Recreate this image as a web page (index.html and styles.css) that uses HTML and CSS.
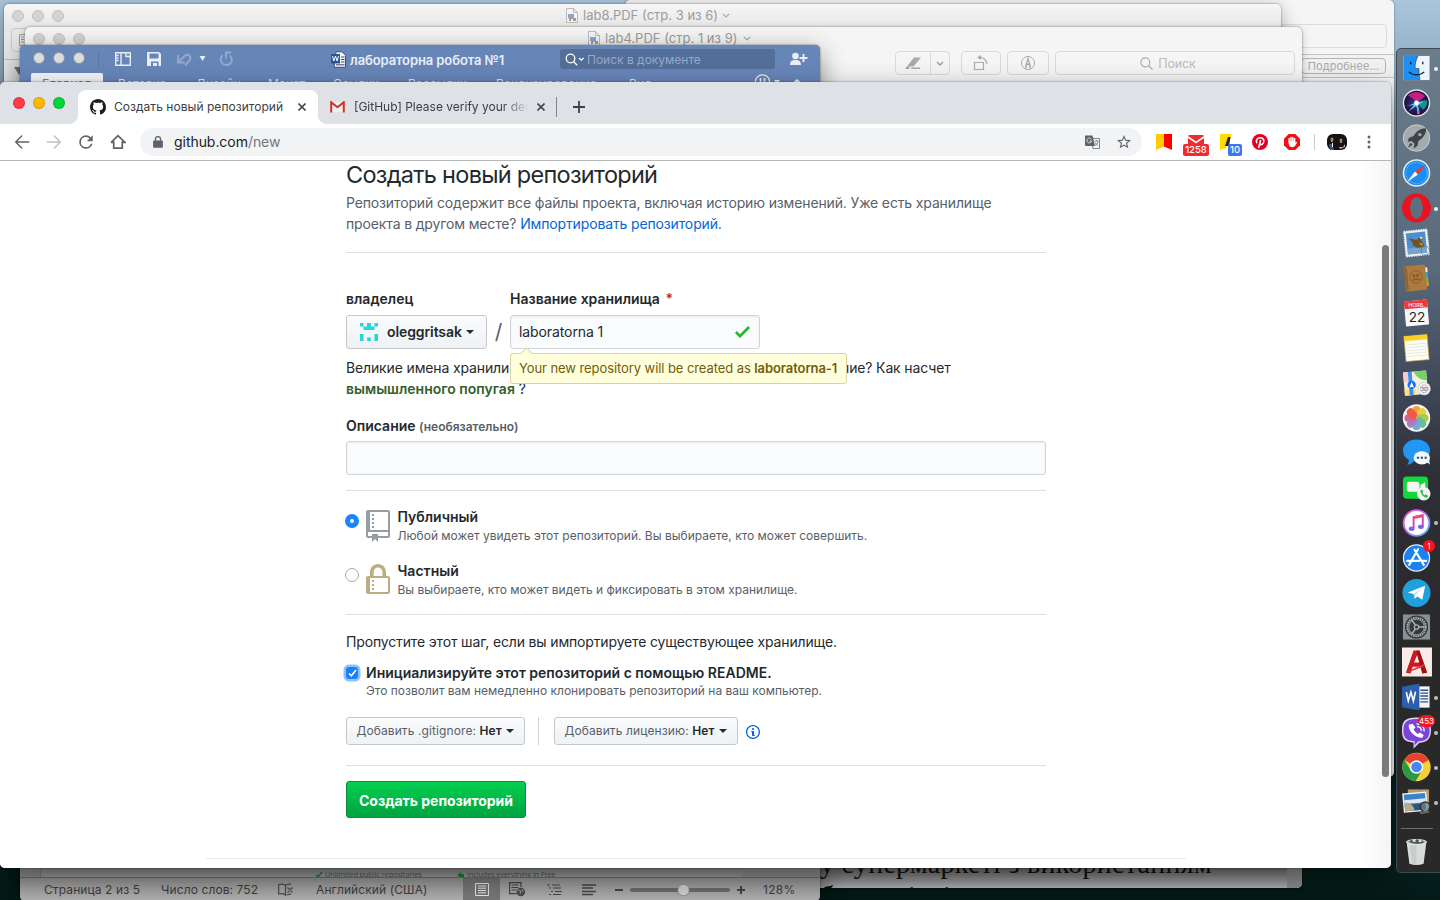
FILE: index.html
```html
<!DOCTYPE html>
<html lang="ru">
<head>
<meta charset="utf-8">
<title>Создать новый репозиторий</title>
<link rel="stylesheet" href="styles.css">
</head>
<body>
<div class="desktop">

  <section class="win win-mail">
    <div class="mail-field"></div>
    <div class="mail-bar"><span class="mail-more">Подробнее...</span></div>
  </section>

  <section class="win win-lab8">
    <div class="pdf-title">
      <div class="lights"><i></i><i></i><i></i></div>
      <div class="pdf-name"><svg class="pdf-icon" width="12" height="15" viewBox="0 0 12 15"><path d="M.5.5h7l4 4v10H.5z" fill="#f4f4f4" stroke="#bbb"/><path d="M7.500 .5v4h4" fill="none" stroke="#bbb"/><rect x="2" y="6" width="6" height="4" fill="#8fa3cb"/><path d="M3 10h7v3H7v-2H5v2H3z" fill="#a39a98"/></svg><span class="t8">lab8.PDF (стр. 3 из 6)</span><svg width="8" height="5" viewBox="0 0 8 5"><path d="M.8.8 4 4 7.200 .8" fill="none" stroke="#aaa" stroke-width="1.200"/></svg></div>
    </div>
    <div class="lab8-tool"><svg width="6" height="12" viewBox="0 0 6 12"><path d="M6 .5H.5v11H6M2 3h3M2 5.500h3M2 8h3" fill="none" stroke="#999"/></svg></div>
    <div class="lab8-tri"></div>
  </section>

  <section class="win win-lab4">
    <div class="pdf-title">
      <div class="lights"><i></i><i></i><i></i></div>
      <div class="pdf-name"><svg class="pdf-icon" width="12" height="15" viewBox="0 0 12 15"><path d="M.5.5h7l4 4v10H.5z" fill="#f4f4f4" stroke="#bbb"/><path d="M7.500 .5v4h4" fill="none" stroke="#bbb"/><rect x="2" y="6" width="6" height="4" fill="#8fa3cb"/><path d="M3 10h7v3H7v-2H5v2H3z" fill="#a39a98"/></svg><span class="t8">lab4.PDF (стр. 1 из 9)</span><svg width="8" height="5" viewBox="0 0 8 5"><path d="M.8.8 4 4 7.200 .8" fill="none" stroke="#aaa" stroke-width="1.200"/></svg></div>
    </div>
    <div class="pdf-tools">
      <div class="pbtn split"><span><svg width="17" height="12" viewBox="0 0 17 12"><path d="M3 8 9 .5h7L8.500 9.500H4zM0 12l2.500-3.500L5 10.500 3.500 12zM7 10.500h8V12H5.500z" fill="#aaa"/></svg></span><b><svg width="8" height="5" viewBox="0 0 8 5"><path d="M1 1l3 3 3-3" fill="none" stroke="#999" stroke-width="1.300"/></svg></b></div>
      <div class="pbtn rot"><svg width="16" height="16" viewBox="0 0 16 16"><path d="M1.500 7.500h9v7h-9zM5 2.500c5-1 8.500 2 9 6.500" fill="none" stroke="#aaa" stroke-width="1.200"/><path d="M8 0 4 2.600 8 5z" fill="#aaa"/></svg></div>
      <div class="pbtn mark"><svg width="16" height="16" viewBox="0 0 16 16"><circle cx="8" cy="8" r="6.500" fill="none" stroke="#aaa"/><path d="M5.500 12 8 3.500l2.500 8.500M6 10.500 8 9l2 1.500V13.500M6 10.500V13.500" fill="none" stroke="#aaa" stroke-width="1.200"/></svg></div>
      <div class="pbtn find"><svg width="13" height="13" viewBox="0 0 13 13"><circle cx="5.300" cy="5.300" r="4.500" fill="none" stroke="#b0b0b0" stroke-width="1.200"/><path d="m8.500 8.500 4 4" stroke="#b0b0b0" stroke-width="1.300"/></svg><span>Поиск</span></div>
    </div>
    <div class="pdf-doc"><p class="doc-l1">у супермаркеті з використанням</p><p class="doc-l2"><span>б</span><span>і</span><span>і</span></p></div>
  </section>

  <section class="win win-word">
    <div class="word-top">
      <div class="lights"><i></i><i></i><i></i></div>
      <svg class="word-tools" width="150" height="20" viewBox="0 0 150 20">
        <path d="M.5 3v16" stroke="#58739f" opacity=".8"/>
        <g fill="none" stroke="#e8edf6" stroke-width="1.400"><path d="M17.700 4.700h14.600v12.600H17.700zM23 5v12M18.500 7.500h2M18.500 10h2M18.500 12.500h2" /><path d="M28 4.500v4h4.500"/></g>
        <path d="M49 4h12l2 2v12H49zM51.500 5.500v5h9v-5zm1.500 8v4.500h2V15h4v3h1.500v-4.500z" fill="#e8edf6" fill-rule="evenodd"/>
        <g fill="none" stroke="#93a9cd" stroke-width="1.900"><path d="M80 7v7.500h7M80.500 14 86 8.500c4-4.500 9 1 5 4.500l-4 4.500"/></g>
        <path d="M101.500 8h6l-3 5z" fill="#e8edf6"/>
        <path d="M124.500 7c-4 5-.5 10 4 10 5 0 7-5 3.500-9.500M133 4.500h-5v6" fill="none" stroke="#93a9cd" stroke-width="1.900"/>
      </svg>
      <svg class="word-doc" width="15" height="17" viewBox="0 0 15 17"><path d="M5 .8h6l3.500 3.500v12H3z" fill="#f5f7fa" stroke="#39517e"/><path d="M10 6h3.500M10 8.500h3.500M10 11h3.500M5 13.800h8.500" stroke="#446"/><path d="M0 3h9v9.500H0z" fill="#2b579a"/><path d="m1.500 5 1.300 5 1.700-5 1.600 5L7.500 5" stroke="#fff" fill="none"/></svg>
      <strong class="word-title">лабораторна робота №1</strong>
      <div class="word-search"><svg width="20" height="13" viewBox="0 0 20 13"><circle cx="5.500" cy="5.500" r="4.300" fill="none" stroke="#fff" stroke-width="1.300"/><path d="m8.700 8.700 3.500 3.500M14 5l2.300 2.200L18.600 5" fill="none" stroke="#fff" stroke-width="1.300"/></svg><span>Поиск в документе</span></div>
      <svg class="word-share" width="18" height="14" viewBox="0 0 18 14"><circle cx="5.500" cy="4" r="3.300" fill="#e8edf6"/><path d="M0 13c0-4 2-5 5.500-5S11 9 11 13zM12.500 2h2v3h3v2h-3v3h-2V7h-3V5h3z" fill="#e8edf6"/></svg>
    </div>
    <div class="word-tabs"><span class="on w1">Главная</span><span class="w2">Вставка</span><span class="w3">Дизайн</span><span class="w4">Макет</span><span class="w5">Ссылки</span><span class="w6">Рассылки</span><span class="w7">Рецензирование</span><span class="w8">Вид</span>
      <svg class="smile" width="48" height="16" viewBox="0 0 48 16"><circle cx="8.500" cy="8" r="7.200" fill="none" stroke="#e8edf6" stroke-width="1.300"/><path d="M6.500 4v4M10.500 4v4" stroke="#e8edf6" stroke-width="1.600"/><path d="M20 6h6l-3 4zM38 9l5-4 5 4z" fill="#e8edf6"/></svg>
    </div>
    <div class="word-page"><div><svg width="8" height="7" viewBox="0 0 8 7"><path d="m1 4 2 2 4-5" fill="none" stroke="#188038" stroke-width="1.500"/></svg><span class="p1">Unlimited public repositories</span><svg width="8" height="7" viewBox="0 0 8 7"><path d="M0 4.500 4 1v2h3v3H3z" fill="#188038"/></svg><span>Includes everything in Free</span></div></div>
    <div class="word-status">
      <span class="s1">Страница 2 из 5</span><span class="s2">Число слов: 752</span>
      <svg class="s3" width="16" height="14" viewBox="0 0 16 14"><path d="M7.500 2.500C6 1 3 1 .7 1.500V11c2.300-.5 5-.5 6.800 1M7.500 2.500V13M7.500 2.500C8.500 1.300 11 1 13 1.300M9 12c1-.7 2-.9 4-.9M9.500 4.500l5 5M14.500 4.500l-5 5" fill="none" stroke="#4a4a4a" stroke-width="1.200"/></svg>
      <span class="s4">Английский (США)</span>
      <span class="s5"><svg width="14" height="13" viewBox="0 0 14 13"><path d="M.5.5h13v12H.5zM3 3h8M3 5.200h8M3 7.500h8M3 9.800h8" fill="none" stroke="#e5e5e5"/></svg></span>
      <svg class="s6" width="17" height="15" viewBox="0 0 17 15"><path d="M12 5V.6H.6v11h7M2.500 3h7M2.500 5.500h7M2.500 8h5" fill="none" stroke="#444" stroke-width="1.200"/><circle cx="11.800" cy="10" r="4.300" fill="#4a4a4a"/><path d="M9 8l3 1-1 3M13 7l1 3" stroke="#999" fill="none"/></svg>
      <svg class="s7" width="16" height="12" viewBox="0 0 16 12"><path d="M0 1h3M5 1h8M2 4h2M6 4h8M4 7.500h2M8 7.500h7M2 10.500h2M6 10.500h8" stroke="#444" stroke-width="1.200"/></svg>
      <svg class="s8" width="14" height="12" viewBox="0 0 14 12"><path d="M0 1h14M0 4h11M0 7.500h14M0 10.500h11" stroke="#444" stroke-width="1.300"/></svg>
      <svg class="s9" width="132" height="14" viewBox="0 0 132 14"><path d="M1 7h8M123 7h8M127 3v8" stroke="#444" stroke-width="2"/><rect x="16" y="5" width="100" height="4" rx="2" fill="#6b6b6b"/><circle cx="69.500" cy="7" r="5.700" fill="#d0d0d0" stroke="#777" stroke-width=".6"/></svg>
      <span class="s10">128%</span>
    </div>
  </section>

  <main class="win chrome">
    <div class="strip">
      <div class="clights"><i class="r"></i><i class="y"></i><i class="g"></i></div>
      <div class="tab active">
        <svg width="16" height="16" viewBox="0 0 16 16"><path fill="#1b1f23" d="M8 0C3.580 0 0 3.580 0 8c0 3.540 2.290 6.530 5.470 7.590.4.070.55-.17.55-.38 0-.19-.01-.82-.01-1.490-2.010.37-2.530-.49-2.690-.94-.09-.23-.48-.94-.82-1.130-.28-.15-.68-.52-.01-.53.63-.01 1.080.58 1.230.82.72 1.210 1.870.87 2.330.66.07-.52.28-.87.51-1.070-1.780-.2-3.640-.89-3.640-3.950 0-.87.31-1.590.82-2.150-.08-.2-.36-1.020.08-2.120 0 0 .67-.21 2.200.82.64-.18 1.320-.27 2-.27s1.360.09 2 .27c1.530-1.040 2.200-.82 2.200-.82.44 1.100.16 1.920.08 2.120.51.56.82 1.270.82 2.150 0 3.070-1.870 3.750-3.650 3.950.29.25.54.73.54 1.480 0 1.070-.01 1.930-.01 2.200 0 .21.15.46.55.38A8.010 8.010 0 0 0 16 8c0-4.420-3.580-8-8-8z"/></svg>
        <span class="tt1">Создать новый репозиторий</span>
        <svg class="x" width="8" height="8" viewBox="0 0 8 8"><path d="m.5.5 7 7m0-7-7 7" stroke="#45494d" stroke-width="1.600"/></svg>
      </div>
      <div class="tab second">
        <svg width="15" height="12" viewBox="0 0 15 12"><path d="M1 1h13v10H1z" fill="#eceff1"/><path d="M1.200 11.500V1.200l6.300 5 6.300-5v10.300" fill="none" stroke="#d93025" stroke-width="2"/></svg>
        <span class="tt2">[GitHub] Please verify your device</span>
        <svg class="x" width="8" height="8" viewBox="0 0 8 8"><path d="m.5.5 7 7m0-7-7 7" stroke="#45494d" stroke-width="1.600"/></svg>
      </div>
      <svg class="newtab" width="12" height="12" viewBox="0 0 12 12"><path d="M6 0v12M0 6h12" stroke="#3c4043" stroke-width="1.800"/></svg>
    </div>
    <div class="toolbar">
      <svg class="ic" viewBox="1 1 22 22"><path fill="#5f6368" d="M22 10.800H5.800l7.100-6.900L11.500 2.500 2 12l9.500 9.500 1.400-1.400L5.800 13.200H22z"/></svg>
      <svg class="ic" viewBox="1 1 22 22"><path fill="#bdc1c6" d="M2 10.800h16.200l-7.100-6.900 1.400-1.400L22 12l-9.500 9.500-1.400-1.400 7.100-6.900H2z"/></svg>
      <svg class="ic" viewBox="2.500 2.500 19 19"><path fill="#5f6368" d="M17.650 6.350A7.950 7.950 0 0 0 12 4a8 8 0 1 0 7.730 10h-2.080A6 6 0 1 1 12 6c1.660 0 3.140.69 4.220 1.780L13 11h7V4z"/></svg>
      <svg class="ic" viewBox="0 0 18 18"><path fill="none" stroke="#5f6368" stroke-width="1.900" d="M4.200 8.200v7.700h9.600V8.200M1.200 9.500 9 1.800l7.800 7.700h-3M1.200 9.500h3"/></svg>
      <div class="omni">
        <svg width="10" height="12" viewBox="0 0 10 12"><path fill="#5f6368" d="M1 4.500h.8V3.200a3.200 3.200 0 0 1 6.400 0v1.300H9c.5 0 .9.400.9.900v5.400c0 .6-.4 1-.9 1H1c-.6 0-.9-.4-.9-1V5.400c0-.5.4-.9.900-.9zm2.100 0h3.800V3.200a1.900 1.900 0 0 0-3.800 0z"/></svg>
        <span class="url"><b>github.com</b>/new</span>
        <svg class="tr" width="15" height="14" viewBox="0 0 15 14"><path d="M6 3.500h8.500v10H8z" fill="#f5f5f5" stroke="#80868b"/><path d="M0 .5h7.500L10 11H1.500Q0 11 0 9.500z" fill="#5f6368"/><path d="M6.300 4.200A2.400 2.400 0 1 0 6.600 6H4.500" fill="none" stroke="#ddd"/><path d="M9.500 6h4M11.500 5v1M13 6.500c-.5 2-2 3.500-3 4M10.300 7.500c.5 1.500 1.500 2.500 2.700 3" fill="none" stroke="#80868b"/></svg>
        <svg width="14" height="14" viewBox="2 2 20 20"><path fill="#5f6368" d="m22 9.240-7.190-.62L12 2 9.190 8.630 2 9.240l5.460 4.730L5.820 21 12 17.270 18.180 21l-1.630-7.030zM12 15.400l-3.760 2.270 1-4.280-3.320-2.880 4.380-.38L12 6.100l1.710 4.040 4.380.38-3.320 2.880 1 4.280z"/></svg>
      </div>
      <div class="ext">
        <svg width="16" height="16" viewBox="0 0 16 16"><path d="M0 0h8v12.500L0 16z" fill="#fc0"/><path d="M8 0h8v16l-8-3.500z" fill="#f00"/></svg>
        <div class="e2"><svg width="16" height="13" viewBox="0 0 16 13"><rect y="1" width="16" height="12" rx="1.500" fill="#f02a2e"/><path d="M0 3 8 8.500 16 3" fill="none" stroke="#fff" stroke-width="1.700"/></svg><em>1258</em></div>
        <div class="e3"><svg width="16" height="16" viewBox="0 0 16 16"><path d="M0 0h12L6 14l-6 2z" fill="#ffdb00"/><path d="M8 3h2.500L9 12H5z" fill="#222"/></svg><em>10</em></div>
        <svg width="16" height="16" viewBox="0 0 16 16"><circle cx="8" cy="8" r="8" fill="#e60023"/><path d="M5 9.300C3 6.300 5.500 3.700 8.300 3.700c3.500 0 4.300 3.200 3 5.500-1.100 2-3 1.700-3.400.3M8.600 6 6.600 14" fill="none" stroke="#fff" stroke-width="1.600"/></svg>
        <svg width="16" height="16" viewBox="0 0 16 16"><path d="M4.700 0h6.600L16 4.700v6.600L11.300 16H4.700L0 11.300V4.700z" fill="#f40d12"/><path d="M5.200 8V4.800M7 7.500V3.500M8.800 7.500V3.500M10.600 8V4.800" stroke="#fff" stroke-width="1.500" stroke-linecap="round"/><path d="M4.500 7h6.800v2l1-1.200.8.600L11 12c-1 1.500-4.500 1.500-5.500 0-.7-1-1-3-1-5z" fill="#fff"/></svg>
      </div>
      <svg class="ava" width="20" height="16" viewBox="0 0 20 16"><rect width="20" height="16" rx="6" fill="#161412"/><path d="M3.500 4.500q2-2 3 .5l-.5 3H4zM12.500 5.500q2-2 3 .5l-.5 3h-2z" fill="#a98068"/><path d="M2 10h3l2 6H3z" fill="#3c5188"/><path d="M5 9h1v4H5z" fill="#fff"/><path d="M12 13h4l2-3v3l-5 2z" fill="#cfa58a"/></svg>
      <svg class="dots" width="4" height="16" viewBox="0 0 4 16"><g fill="#5f6368"><circle cx="2" cy="3" r="1.500"/><circle cx="2" cy="8" r="1.500"/><circle cx="2" cy="13" r="1.500"/></g></svg>
    </div>

    <div class="page">
      <form class="col">
        <h1>Создать новый репозиторий</h1>
        <p class="lead"><span class="l1">Репозиторий содержит все файлы проекта, включая историю изменений. Уже есть хранилище</span><br><span class="l2">проекта в другом месте? <a>Импортировать репозиторий.</a></span></p>
        <div class="names">
          <div class="field"><label>владелец</label>
            <div class="owner"><svg width="18" height="18" viewBox="0 0 18 18"><path fill="#2cd5d5" d="M0 0h3.500v3.500H0zM7 0h4v3.500H7zM14.500 0H18v3.500h-3.500zM3.500 3.500h11V7h-11zM0 11h3.500v7H0zM14.500 11H18v7h-3.500zM7.200 14.500h3.600V18H7.200z"/></svg><b>oleggritsak</b><i class="caret"></i></div></div>
          <span class="slash">/</span>
          <div class="field"><label class="lab2">Название хранилища <em>*</em></label>
            <div class="input name"><span>laboratorna 1</span><svg width="15" height="12" viewBox="0 3.500 12 9.500" preserveAspectRatio="none"><path fill="#28b52f" d="M12 5l-8 8-4-4 1.500-1.500L4 10l6.500-6.500z"/></svg>
              <div class="tip">Your new repository will be created as <b>laboratorna-1</b></div></div></div>
        </div>
        <p class="hint"><span class="h1">Великие имена хранили</span><span class="h2">ние? Как насчет</span><br><b>вымышленного попугая</b> ?</p>
        <label class="desc">Описание <small>(необязательно)</small></label>
        <div class="input wide"></div>
        <div class="vis">
          <div class="opt"><i class="radio on"></i><svg width="24" height="32" viewBox="0 0 12 16"><path fill="#959da5" d="M4 9H3V8h1v1zm0-3H3v1h1V6zm0-2H3v1h1V4zm0-2H3v1h1V2zm8-1v12c0 .55-.45 1-1 1H6v2l-1.500-1.500L3 16v-2H1c-.55 0-1-.45-1-1V1c0-.55.45-1 1-1h10c.55 0 1 .45 1 1zm-1 10H1v2h2v-1h3v1h5v-2zm0-10H2v9h9V1z"/></svg><div><b class="v1">Публичный</b><small class="v2">Любой может увидеть этот репозиторий. Вы выбираете, кто может совершить.</small></div></div>
          <div class="opt"><i class="radio"></i><svg width="24" height="32" viewBox="0 0 12 16"><path fill="#bcae83" d="M4 13H3v-1h1v1zm8-6v7c0 .55-.45 1-1 1H1c-.55 0-1-.45-1-1V7c0-.55.45-1 1-1h1V4c0-2.200 1.800-4 4-4s4 1.800 4 4v2h1c.55 0 1 .45 1 1zM3.800 6h4.410V4c0-1.220-.98-2.200-2.200-2.200-1.220 0-2.200.98-2.200 2.200v2H3.800zM11 7H2v7h9V7zM4 8H3v1h1V8zm0 2H3v1h1v-1z"/></svg><div><b class="v3">Частный</b><small class="v4">Вы выбираете, кто может видеть и фиксировать в этом хранилище.</small></div></div>
        </div>
        <p class="skip">Пропустите этот шаг, если вы импортируете существующее хранилище.</p>
        <div class="init"><i class="check"><svg width="9" height="8" viewBox="0 0 9 8"><path d="m1 4.500 2.300 2.300L8 1" fill="none" stroke="#fff" stroke-width="1.700"/></svg></i><div><b class="i1">Инициализируйте этот репозиторий с помощью README.</b><small class="i2">Это позволит вам немедленно клонировать репозиторий на ваш компьютер.</small></div></div>
        <div class="adds"><span class="sbtn b1"><span>Добавить .gitignore: <b>Нет</b></span><i class="caret"></i></span><span class="vr"></span><span class="sbtn b2"><span>Добавить лицензию: <b>Нет</b></span><i class="caret"></i></span><svg width="14" height="16" viewBox="0 0 14 16"><path fill="#0366d6" d="M6.300 5.690a.942.942 0 0 1-.28-.7c0-.28.09-.52.28-.7.19-.18.42-.28.7-.28.28 0 .52.09.7.28.18.19.28.42.28.7 0 .28-.09.52-.28.7a1 1 0 0 1-.7.3c-.28 0-.52-.11-.7-.3zM8 7.990c-.02-.25-.11-.48-.31-.69-.2-.19-.42-.3-.69-.31H6c-.27.02-.48.13-.69.31-.2.2-.3.44-.31.69h1v3c.02.27.11.5.31.69.2.2.42.31.69.31h1c.27 0 .48-.11.69-.31.2-.19.3-.42.31-.69H8V7.980v.01zM7 2.300c-3.140 0-5.700 2.540-5.700 5.680 0 3.140 2.560 5.700 5.700 5.700s5.700-2.550 5.700-5.700c0-3.150-2.560-5.690-5.700-5.690v.01zM7 .98c3.860 0 7 3.140 7 7s-3.140 7-7 7-7-3.120-7-7 3.140-7 7-7z"/></svg></div>
        <div class="submit"><span class="create"><span>Создать репозиторий</span></span></div>
      </form>
      <div class="foot"></div>
      <div class="scroll"></div>
    </div>
  </main>

  <aside class="dock">
    <div class="app run"><svg viewBox="0 0 30 30"><path d="M1.500 2.500h27v25h-27z" fill="#eef4fb"/><path d="M1.500 2.500h15c-2 4-3 8-3 13h4c0 4 .3 8 1 12h-17z" fill="#1e90f5"/><path d="M16.500 2.500c-2 4-3 8-3 13h4c0 4 .3 8 1 12" fill="none" stroke="#234" stroke-width=".6"/><path d="M9 8.500v2.500M21.500 8.500V11M7 19c4 4 12 4 16 0" fill="none" stroke="#123" stroke-width="1.400"/></svg></div>
    <div class="app"><svg viewBox="0 0 30 30"><defs><radialGradient id="siri"><stop offset="0" stop-color="#3a3f9c"/><stop offset=".6" stop-color="#2b1b5c"/><stop offset="1" stop-color="#15102e"/></radialGradient></defs><circle cx="15" cy="15" r="13.500" fill="url(#siri)" stroke="#e0e2ea" stroke-width="1.500"/><path d="M6 7q9-7 18 1-5 4-9 6-5-5-9-7z" fill="#e0218a" opacity=".85"/><path d="M15 15l11-3q1 6-4 10z" fill="#10b09a" opacity=".8"/><path d="M3.500 18c5-1 9-2 11-4 3 0 7 0 10-2-4 3-6 4-8 5l2 9-4-8-8 6 6-7z" fill="#4dd9ee"/><path d="m15 16 3 11-2-.500z" fill="#f07ad0"/><circle cx="15" cy="15" r="2.500" fill="#fff"/></svg></div>
    <div class="app"><svg viewBox="0 0 30 30"><circle cx="15" cy="15" r="13.700" fill="#a2abae" stroke="#c9cfd1"/><path d="M25 5c-6 0-10 3-13 8l-5 2-1 4 4-1 3 3-1 5 4-3 1-5c5-3 8-7 8-13zM9 20l-3 5 5-3z" fill="#3d4347"/><circle cx="18.500" cy="11.500" r="1.800" fill="#a2abae"/></svg></div>
    <div class="app"><svg viewBox="0 0 30 30"><circle cx="15" cy="15" r="13.500" fill="#1d8df0" stroke="#e4e8ec" stroke-width="1.600"/><circle cx="15" cy="15" r="11" fill="none" stroke="#8dccff" stroke-width="1.200" stroke-dasharray=".7 1.300"/><path d="m25 5.500-8.500 11-3-3z" fill="#f33"/><path d="m5 24.500 8.500-11 3 3z" fill="#fff"/></svg></div>
    <div class="app run"><svg viewBox="0 0 30 30"><path fill="#e8131f" fill-rule="evenodd" d="M15 0a15 15 0 1 0 0 30 15 15 0 0 0 0-30zm0 4c4 0 6.500 5 6.500 11S19 26 15 26 8.500 21 8.500 15 11 4 15 4z"/></svg></div>
    <div class="app"><svg viewBox="0 0 30 30"><g transform="rotate(-6 15 15)"><path d="M3 2h24v26H3z" fill="#eef0f0" stroke="#eef0f0" stroke-dasharray="1.500 1" stroke-width="1.500"/><path d="M5 4h20v22H5z" fill="#4c8fd0"/><path d="M5 20h20v6H5z" fill="#7aa3cc"/><path d="m7 9 8 3 5-3 2 2-2 2 3 4-2 3-6 0-4-3 0-3z" fill="#6e5228"/><path d="m19 9 3 1-2 2z" fill="#fff"/><path d="m17 15 5 1-2 3z" fill="#b58a3c"/></g><circle cx="24" cy="23" r="4.500" fill="none" stroke="#56718c" opacity=".7"/></svg></div>
    <div class="app"><svg viewBox="0 0 30 30"><g transform="rotate(-5 15 15)"><path d="M24 5h3v5h-3z" fill="#eee"/><path d="M24 10h3v5h-3z" fill="#29a9c8"/><path d="M24 15h3v5h-3z" fill="#5cc34b"/><path d="M24 20h3v4h-3z" fill="#f79a1e"/><rect x="3" y="2" width="22" height="26" rx="1.500" fill="#ad7a40"/><path d="M3 3h3v24H3z" fill="#92642f"/><circle cx="14.500" cy="14" r="6.500" fill="none" stroke="#85592a" stroke-width=".8"/><circle cx="12.500" cy="12.500" r="1.800" fill="#8d602e"/><circle cx="16.500" cy="12.500" r="1.800" fill="#8d602e"/><path d="M9.500 17.500c1-3.500 9-3.500 10 0z" fill="#8d602e"/></g></svg></div>
    <div class="app"><svg viewBox="0 0 30 30"><g transform="rotate(-5 15 15)"><rect x="3" y="2" width="24" height="26" rx="1" fill="#f7f7f7"/><path d="M3 2h24v8H3z" fill="#f0383c"/></g><text x="15" y="8.500" class="dk mon">НОЯБ.</text><text x="15.500" y="24" class="dk day">22</text></svg></div>
    <div class="app"><svg viewBox="0 0 30 30"><g transform="rotate(-5 15 15)"><path d="M3 2h24v26H3z" fill="#fffef6" stroke="#c8a640" stroke-width=".7"/><path d="M3 2h24v5H3z" fill="#fbcf26"/><path d="M4 11h22M4 14h22M4 17h22M4 20h22M4 23h22" stroke="#ddd" stroke-width=".7"/></g></svg></div>
    <div class="app"><svg viewBox="0 0 30 30"><g transform="rotate(-5 15 15)"><path d="M2 3h24v24H2z" fill="#f3efdf"/><path d="M13 3h13v10C20 13 15 9 13 3z" fill="#78d167"/><path d="M2 3h5v10H2z" fill="#f6c8cf"/><path d="M2 21h12v6H2z" fill="#fbe081"/><path d="M7 3h4v24H7z" fill="#3f8cf3"/></g><circle cx="10" cy="17" r="4.300" fill="#1670ef"/><path d="m10 14 2.500 6-2.500-1-2.500 1z" fill="#fff"/><circle cx="23" cy="21" r="6.500" fill="#f8f8f8" stroke="#aaa" stroke-width=".5"/><circle cx="23" cy="21" r="4" fill="none" stroke="#69829c" stroke-dasharray="1 .6"/><text x="23" y="22.800" class="dk sm">3D</text></svg></div>
    <div class="app"><svg viewBox="0 0 30 30"><circle cx="15" cy="15" r="14.200" fill="#f5f5f3"/><g opacity=".92"><rect x="11" y="2.500" width="8" height="12" rx="4" fill="#f79b26"/><rect x="11" y="2.500" width="8" height="12" rx="4" fill="#e3cf2c" transform="rotate(45 15 15)"/><rect x="11" y="2.500" width="8" height="12" rx="4" fill="#9ecb3b" transform="rotate(90 15 15)"/><rect x="11" y="2.500" width="8" height="12" rx="4" fill="#5cba8a" transform="rotate(135 15 15)"/><rect x="11" y="2.500" width="8" height="12" rx="4" fill="#61a8d7" transform="rotate(180 15 15)"/><rect x="11" y="2.500" width="8" height="12" rx="4" fill="#9b7bc0" transform="rotate(225 15 15)"/><rect x="11" y="2.500" width="8" height="12" rx="4" fill="#d5578e" transform="rotate(270 15 15)"/><rect x="11" y="2.500" width="8" height="12" rx="4" fill="#ee4d35" transform="rotate(315 15 15)"/></g></svg></div>
    <div class="app"><svg viewBox="0 0 30 30"><path d="M15 1c8 0 14 5 14 11.500S23 24 15 24c-1 0-2 0-3-.3C10 26 8 27 5 27c2-1 2-3 2-5-4-2-6-5-6-9.500C1 6 7 1 15 1z" fill="#2196f3"/><ellipse cx="20.500" cy="20" rx="8.500" ry="6.800" fill="#f7f7f7"/><path d="m25 24 4 3-1-5z" fill="#f7f7f7"/><g fill="#23619f"><circle cx="16.500" cy="20" r="1.300"/><circle cx="20.500" cy="20" r="1.300"/><circle cx="24.500" cy="20" r="1.300"/></g></svg></div>
    <div class="app"><svg viewBox="0 0 30 30"><rect x="1" y="3" width="26" height="23" rx="4" fill="#13d83d"/><rect x="5" y="8.500" width="13" height="10.500" rx="2.500" fill="#f6f6f6"/><path d="m19 12 5-3v10l-5-3z" fill="#f6f6f6"/><circle cx="22.500" cy="21" r="7" fill="#f3f4f3"/><path d="M19 17.500c0 4 4 7.500 7 7.500l1-2-2.500-1.500-1 1c-1-.5-2-1.500-2.500-2.500l1-1-1-2.500z" fill="#24c43f"/></svg></div>
    <div class="app run"><svg viewBox="0 0 30 30"><defs><linearGradient id="itn" x2="1" y2="1"><stop offset="0" stop-color="#f45ac0"/><stop offset=".5" stop-color="#b06cf5"/><stop offset="1" stop-color="#35baf6"/></linearGradient></defs><circle cx="15" cy="15" r="13.300" fill="#fff" stroke="url(#itn)" stroke-width="2"/><path d="M12 20.500V9l9.500-2v11.500" fill="none" stroke="#d246b8" stroke-width="2"/><path d="M12 9.500 21.500 7.500" stroke="#f14a83" stroke-width="3"/><ellipse cx="10" cy="21" rx="3" ry="2.300" fill="#7d62e8"/><ellipse cx="19.500" cy="19" rx="3" ry="2.300" fill="#7d62e8"/></svg></div>
    <div class="app"><svg viewBox="0 0 30 30"><circle cx="15" cy="15" r="13.500" fill="#1c82f2" stroke="#e6ebf2" stroke-width="1.300"/><path d="m16.500 6-9 16M13 6.500l9.500 15.500M5.500 18h12M21 18h4" stroke="#fff" stroke-width="2.300" stroke-linecap="round"/></svg><em class="n1">1</em></div>
    <div class="app"><svg viewBox="0 0 30 30"><circle cx="15" cy="15" r="14.500" fill="#20a0dc"/><path d="M6 14.500 24 7.500 21 22l-5-3.500-3 2.500-1-5z" fill="#fff"/><path d="m12 16 8-5.500-6.500 6.500L13 21z" fill="#b8d5e8"/></svg></div>
    <div class="app"><svg viewBox="0 0 30 30"><path d="M1 2h28v26H1z" fill="#879094"/><circle cx="15" cy="15" r="12" fill="#35393b"/><circle cx="15" cy="15" r="9.500" fill="none" stroke="#a9aeb0" stroke-width="2" stroke-dasharray="1.700 .7"/><circle cx="15" cy="15" r="8" fill="none" stroke="#92989a"/><circle cx="15" cy="15" r="2.300" fill="none" stroke="#a9aeb0" stroke-width="1.300"/><path d="M17 15h6M14 17l-4 5M14 13l-4-5" stroke="#a9aeb0" stroke-width="1.500"/></svg></div>
    <div class="app"><svg viewBox="0 0 30 30"><path d="M0 0h31v30H0z" fill="#f7ece7"/><path d="m4 26 8-23h6l8 23-5 1-2-7h-8l-2 7zM12.500 15.500h5.500L15.500 8z" fill="#c91c22" fill-rule="evenodd"/><path d="m15 3 6 24 5-1-8-23z" fill="#8e0c12" opacity=".65"/><path d="m5 25 18-8-1 3-14 5z" fill="#e4353a"/></svg></div>
    <div class="app run"><svg viewBox="0 0 30 30"><path d="M15 4h13.500v22H15z" fill="#f4f4f4"/><path d="M19 8h8M19 11h8M19 14h8M19 17h8M19 20h8" stroke="#31548c" stroke-width="1.400"/><path d="M0 4.500 18 1v28L0 25.500z" fill="#2b5eac"/><path d="m4.500 10 2 9 2.700-9 2.600 9 2.200-9.500" fill="none" stroke="#fff" stroke-width="1.700"/></svg></div>
    <div class="app run"><svg viewBox="0 0 30 30"><path d="M15 0c12 0 15 4 15 13s-4 13-12 13l-6 6v-6C2 25 0 22 0 13S3 0 15 0z" fill="#ddd3f6"/><path d="M15 1.500c11 0 13.500 4 13.500 11.500S26 24.500 17 24.500L13 29v-4.500C3 24 1.500 20 1.500 13S4 1.500 15 1.500z" fill="#7b45d8"/><path d="M7 7.500c-1 7 8 14 14 13.500l1.500-3-4-2.500-2 1.500c-2-1-4-3-4.500-5l2-1.500L11 6.500z" fill="#fff"/><path d="M15 6.500c5 0 8 3 8 8M15.500 9.500c3 0 4.500 1.500 4.500 4.500" stroke="#fff" fill="none" stroke-width="1.300"/></svg><em class="n453">453</em></div>
    <div class="app run"><svg viewBox="0 0 30 30"><circle cx="15" cy="15" r="14.700" fill="#f9cf3a"/><path d="M15 15 2.300 7.700A14.700 14.700 0 0 1 27.700 7.700z" fill="#e8412f"/><path d="M2.300 7.600A14.700 14.700 0 0 0 14 29.700L21 18l-12 0z" fill="#2a9a48"/><circle cx="15" cy="15" r="7" fill="#fff"/><circle cx="15" cy="15" r="5.500" fill="#4489f0"/></svg></div>
    <div class="app run"><svg viewBox="0 0 30 30"><path d="M6 2h22v19H6z" fill="#b69a6b"/><g transform="rotate(-5 15 15)"><path d="M1 5h25v20H1z" fill="#f2f2ef"/><path d="M2.500 6.500h22v17h-22z" fill="#3c83c9"/><path d="M2.500 12h22v4h-22z" fill="#dbe9f3"/><path d="M2.500 17h22v6.500h-22z" fill="#31567e"/><path d="M2.500 15q8-1 10 8.500H2.500z" fill="#b7ab8a"/></g><circle cx="24" cy="20" r="5" fill="#77848c" fill-opacity=".7" stroke="#2e3236" stroke-width="1.600"/><path d="M19 26.500 28 25" stroke="#6d6757" stroke-width="2.500"/></svg></div>
    <hr>
    <div class="app"><svg class="trash" viewBox="0 0 30 34"><path d="M3 4h24l-3.500 27q-8.500 3-17 0z" fill="#d9dbda"/><path d="m7 8 3 23 5 1V8zM19 8l-1 23" fill="#c3c6c5" opacity=".7"/><ellipse cx="15" cy="5" rx="12" ry="3" fill="#aeb2b2" stroke="#f2f2f2"/><path d="m6 5 3-3 3 3 4-4 3 4 3-2 2 3q-9 3-18-1z" fill="#4e5d5c"/><path d="m10 4 3-2 1 3zM17 5l3-3 1 3z" fill="#e8eded"/></svg></div>
  </aside>
</div>
</body>
</html>
```
FILE: styles.css
```css
* { box-sizing: border-box; }
body { margin: 0; font-family: Inter, "Liberation Sans", sans-serif; }
p, h1 { margin: 0; }
svg { display: block; flex: none; }
i, em { font-style: normal; }
span, b, strong, small { white-space: nowrap; }

.desktop {
  position: relative; width: 1440px; height: 900px; overflow: hidden;
  background: linear-gradient(#a9c6dd 0, #8ea9bf 80px, #56697c 300px, #2a3848 450px, #0d2129 600px, #06211e 860px, #041a17 900px);
}
.win { position: absolute; overflow: hidden; }

/* Mail window behind everything */
.win-mail { left: 625px; top: 0; width: 769px; height: 777px; background: #f5f5f5; border-radius: 5px; box-shadow: 0 0 2px rgba(0,0,0,.5); padding-top: 24px; }
.mail-field { height: 24px; margin: 0 7px 0 600px; border: 1px solid #dcdcdc; border-radius: 4px; }
.mail-bar { margin-top: 6px; height: 24px; border: solid #c4c4c4; border-width: 1px 0; background: #f1f1f1; display: flex; justify-content: flex-end; padding: 3px 8px 0 0; }
.mail-more { width: 85px; height: 16px; border: 1px solid #b4b4b4; border-radius: 4px; font-size: 11px; line-height: 14px; color: #aaa; text-align: center; letter-spacing: .1px; }

/* Preview windows */
.win-lab8 { left: 4px; top: 4px; width: 1277px; height: 600px; background: linear-gradient(#f6f6f6, #e6e6e6 24px, #e6e6e6 60px, #d8d8d8); border-radius: 5px; box-shadow: 0 0 2px rgba(0,0,0,.5), 0 4px 18px rgba(0,0,0,.3); }
.win-lab4 { left: 25px; top: 27px; width: 1277px; height: 861px; background: #f5f5f5; border-radius: 5px; box-shadow: 0 0 2px rgba(0,0,0,.5), 0 3px 10px rgba(0,0,0,.2); display: flex; flex-direction: column; }
.pdf-title { display: flex; height: 23px; align-items: center; flex: none; }
.lights { display: flex; gap: 8px; }
.lights i { width: 12px; height: 12px; border-radius: 50%; background: #d3d3d3; border: 1px solid #c2c2c2; }
.win-lab8 .lights { margin-left: 8px; }
.win-lab4 .lights { margin-left: 8px; }
.pdf-name { display: flex; align-items: center; color: #9b9b9b; font-size: 13px; }
.win-lab8 .pdf-name { margin-left: 502px; }
.win-lab4 .pdf-name { margin-left: 503px; }
.t8 { width: 134px; margin: -1px 5px 0 5px; }
.win-lab4 .t8 { width: 133px; }
.lab8-tool { width: 40px; height: 24px; margin: 1px 0 0 7px; border: 1px solid #c9c9c9; border-radius: 4px; padding: 5px 0 0 7px; }
.lab8-tri { height: 30px; margin-top: 7px; border-top: 1px solid #bbb; padding: 7px 0 0 10px; }
.lab8-tri::before { content: ""; display: block; width: 0; border: solid transparent; border-width: 8px 5px 0; border-top-color: #777; }
.pdf-tools { display: flex; margin: 1px 0 0 870px; height: 24px; flex: none; }
.pbtn { height: 24px; border: 1px solid #d9d9d9; border-radius: 4px; display: flex; align-items: center; justify-content: center; color: #bcbcbc; font-size: 13px; gap: 5px; }
.split { width: 55px; gap: 0; justify-content: flex-start; }
.split span { width: 34px; display: flex; justify-content: center; }
.split b { border-left: 1px solid #d9d9d9; height: 22px; display: flex; align-items: center; padding: 0 5px; }
.rot { width: 40px; margin-left: 11px; }
.mark { width: 42px; margin-left: 6px; }
.find { width: 240px; margin-left: 6px; padding-right: 14px; font-size: 12.500px; letter-spacing: -.1px; }
.pdf-doc { margin-top: auto; height: 30px; background: linear-gradient(#6f6f6f 10px, #b2b2b2); border-right: 15px solid #8d8d8d; font-family: "Liberation Serif", serif; font-size: 28px; color: #111; overflow: hidden; padding-left: 795px; }
.pdf-doc p { height: 32px; line-height: 32px; margin-top: -10px; white-space: nowrap; letter-spacing: .27px; }
.pdf-doc .doc-l2 { margin-top: 0; display: flex; }
.doc-l2 span { width: 88px; }
.doc-l2 span + span { width: 35px; }

/* Word */
.win-word { left: 20px; top: 45px; width: 800px; height: 856px; background: #9c9c9c; border-radius: 5px; box-shadow: 0 0 2px rgba(0,0,0,.6), 0 8px 26px rgba(0,0,0,.45); display: flex; flex-direction: column; }
.word-top { height: 28px; background: #6786b8; display: flex; align-items: center; flex: none; }
.word-top .lights { margin: -2px 0 0 13px; }
.word-top .lights i { background: #dcdcdc; border-color: #8d94a1; }
.word-tools { margin: -2px 0 0 13px; }
.word-doc { margin-left: 83px; }
.word-title { width: 210px; margin-left: 4px; font-size: 13px; font-weight: 600; color: #e9eef6; padding-top: 2px; letter-spacing: -.1px; }
.word-search { width: 215px; height: 20px; background: #536e98; border-radius: 3px; display: flex; align-items: center; padding-left: 5px; gap: 2px; font-size: 12px; color: #95a9cb; }
.word-search span { padding-top: 1px; }
.word-share { margin-left: 15px; }
.word-tabs { height: 9px; background: #6786b8; display: flex; overflow: hidden; font-size: 12px; color: #dfe6f1; line-height: 22px; flex: none; }
.word-tabs span { height: 22px; padding-left: 0; flex: none; letter-spacing: .2px; }
.word-tabs .on { margin: 0 15px 0 11px; background: #f5f6f8; color: #6583b3; padding-left: 11px; border-radius: 2px 2px 0 0; }
.word-tabs .w1 { width: 72px; } .w2 { width: 78px; } .w3 { width: 72px; } .w4 { width: 65px; } .w5 { width: 75px; } .w6 { width: 88px; } .w7 { width: 133px; } .w8 { width: 125px; }
.smile { margin-top: 1px; }
.word-page { margin-top: auto; height: 10px; background: #909090; padding: 0 78px 0 20px; overflow: hidden; }
.word-page div { height: 10px; border-left: 1px solid #808080; background: linear-gradient(#858585, #a0a0a0); display: flex; align-items: flex-start; padding: 4px 0 0 274px; font-size: 7.500px; line-height: 9px; color: #555; font-family: "Open Sans", sans-serif; }
.word-page span { margin: -1px 0 0 2px; line-height: 9px; letter-spacing: -.2px; }
.word-page .p1 { width: 132px; letter-spacing: -.15px; }
.word-status { height: 24px; border-top: 1px solid #6e6e6e; background: linear-gradient(#969696, #b0b0b0); display: flex; align-items: center; font-size: 12px; color: #3c3c3c; flex: none; }
.word-status span { letter-spacing: .1px; margin-top: -1px; }
.word-status .s5 { margin-top: 0; }
.word-status .s10 { letter-spacing: .3px; }
.s1 { width: 117px; margin-left: 24px; } .s2 { width: 117px; } .s3 { margin-right: 22px; } .s4 { width: 147px; }
.s5 { width: 37px; height: 23px; background: #777; display: flex; align-items: center; justify-content: center; }
.s6 { margin-left: 9px; } .s7 { margin-left: 21px; } .s8 { margin-left: 19px; } .s9 { margin-left: 18px; } .s10 { margin-left: 17px; }

/* Browser */
.chrome { left: 0; top: 82px; width: 1391px; height: 786px; background: #fff; border-radius: 5px; box-shadow: 0 0 2px rgba(0,0,0,.5), 0 10px 28px rgba(0,0,0,.45); display: flex; flex-direction: column; }
.strip { height: 42px; background: #dee1e6; display: flex; align-items: flex-end; flex: none; }
.clights { display: flex; gap: 8px; margin: 0 13px 15px 13px; }
.clights i { width: 12px; height: 12px; border-radius: 50%; border: .5px solid rgba(0,0,0,.15); }
.r { background: #ff3b47; } .y { background: #ffb800; } .g { background: #00d53a; }
.tab { height: 34px; display: flex; align-items: center; font-size: 12px; color: #3c4043; }
.active { position: relative; width: 240px; background: #fff; border-radius: 8px 8px 0 0; padding-left: 12px; }
.active::before, .active::after { content: ""; position: absolute; bottom: 0; width: 8px; height: 8px; }
.active::before { left: -8px; background: radial-gradient(circle at 0 0, transparent 7.500px, #fff 8px); }
.active::after { right: -8px; background: radial-gradient(circle at 100% 0, transparent 7.500px, #fff 8px); }
.tt1 { width: 176px; margin: -2px 8px 0; letter-spacing: .04px; }
.second { width: 239px; padding-left: 12px; position: relative; }
.second::after { content: ""; position: absolute; right: 0; top: 7px; width: 1px; height: 20px; background: #80868b; }
.tt2 { width: 175px; margin: -2px 8px 0 9px; overflow: hidden; -webkit-mask-image: linear-gradient(90deg, #000 85%, transparent); mask-image: linear-gradient(90deg, #000 85%, transparent); }
.newtab { margin: 0 0 11px 16px; }
.toolbar { height: 37px; padding-left: 14px; border-bottom: 1px solid #b5b7b9; display: flex; align-items: center; gap: 16px; flex: none; position: relative; }
.ic { width: 16px; height: 16px; }
.omni { width: 1002px; height: 28px; border-radius: 14px; background: #f1f3f4; margin-left: -2px; display: flex; align-items: center; padding: 0 11px 0 13px; font-size: 14px; color: #73777c; }
.url { margin: -2px 0 0 11px; flex: 1; letter-spacing: -.05px; }
.url b { font-weight: 400; color: #202124; }
.tr { margin-right: 17px; }
.ext { display: flex; gap: 16px; margin-left: -2px; }
.ext > * { position: relative; width: 16px; height: 16px; }
.ext em { position: absolute; color: #fff; font-size: 9.5px; line-height: 12px; height: 12px; top: 10px; text-align: center; border-radius: 2px; font-weight: 500; }
.e2 em { left: -5px; width: 26px; background: #f02a2e; }
.e3 em { left: 8px; width: 14px; background: #4075f0; }
.ava { margin-left: 10px; }
.ava + .dots { margin-left: 4px; }
.ext + .ava { margin-left: 11px; }
.toolbar::after { content: ""; position: absolute; left: 1314px; top: 10px; width: 1px; height: 16px; background: #c8cbcf; }

/* GitHub form */
.page { flex: 1; position: relative; padding-left: 346px; color: #24292e; font-size: 14px; line-height: 21px; background: linear-gradient(90deg, #fff 1360px, #f4f4f4); }
.col { width: 700px; display: block; }
h1 { font-size: 23.500px; font-weight: 400; line-height: 36px; height: 32px; margin-top: -4px; white-space: nowrap; letter-spacing: -.72px; }
.lead { color: #586069; height: 64px; padding-top: 3px; border-bottom: 1px solid #dfe2e5; letter-spacing: -.14px; }
.lead a { color: #0366d6; }
.names { display: flex; padding-top: 35px; height: 97px; }
.field label { display: block; font-weight: 600; height: 27px; white-space: nowrap; }
.field em { color: #cb2431; margin-left: 2px; }
.owner { width: 141px; height: 34px; border: 1px solid #c5c9cd; border-radius: 3px; background: linear-gradient(#fafbfc, #eff3f6 90%); display: flex; align-items: center; padding-left: 13px; }
.owner b { font-weight: 600; width: 76px; margin: -2px 3px 0 9px; letter-spacing: -.1px; }
.caret { width: 0; height: 0; border: 4px solid transparent; border-top-color: #24292e; border-bottom: 0; flex: none; }
.slash { width: 23px; text-align: center; padding-top: 33px; font-size: 21px; color: #586069; }
.input { height: 34px; border: 1px solid #d1d5da; border-radius: 3px; background: #fafbfc; box-shadow: inset 0 1px 2px rgba(27,31,35,.075); }
.name { width: 250px; position: relative; display: flex; align-items: center; justify-content: space-between; padding: 0 9px 0 8px; }
.name > span { margin-top: -2px; letter-spacing: -.1px; }
.tip { position: absolute; left: -1px; top: 37px; width: 337px; height: 31px; border: 1px solid #d8d3a0; border-radius: 3px; background: #ffffdb; color: #735c0f; font-size: 13px; line-height: 29px; padding-left: 8px; white-space: nowrap; letter-spacing: -.08px; }
.tip b { font-weight: 600; }
.tip::before { content: ""; position: absolute; left: 11px; top: -5px; width: 8px; height: 8px; background: #ffffdb; border: solid #d8d3a0; border-width: 1px 0 0 1px; transform: rotate(45deg); }
.hint { height: 65px; padding-top: 7px; letter-spacing: -.14px; }
.hint b { color: #35602a; font-weight: 600; letter-spacing: 0; }
.h1 { display: inline-block; width: 495px; }
.desc { display: block; font-weight: 600; height: 26px; }
.desc small { font-size: 12px; color: #586069; font-weight: 600; }
.vis { margin-top: 15px; border: solid #dfe2e5; border-width: 1px 0; height: 125px; padding-top: 16px; }
.opt { display: flex; height: 54px; line-height: 18px; }
.opt svg { margin: 3px 8px 0 7px; }
.opt > div { margin-left: -.5px; }
.opt b, .opt small, .init b, .init small { display: block; }
.opt b, .init b { font-weight: 600; line-height: 20px; }
.opt small, .init small { font-size: 12px; color: #586069; line-height: 17px; }
.radio { width: 14px; height: 14px; border-radius: 50%; border: 1px solid #a9a9a9; background: #fff; margin: 7px 0 0 -1px; }
.radio.on { border: 5px solid #1b86fb; }
.skip { padding-top: 16px; height: 48px; white-space: nowrap; letter-spacing: -.15px; }
.init { display: flex; height: 54px; }
.check { width: 12px; height: 12px; margin: 4px 8px 0 0; border-radius: 3px; background: #1b7ff5; box-shadow: 0 0 0 2.500px #8cc3fb; display: flex; align-items: center; justify-content: center; }
.init small { margin-top: -1px; }
.adds { display: flex; height: 49px; border-bottom: 1px solid #dfe2e5; }
.sbtn { height: 28px; border: 1px solid #c5c9cd; border-radius: 3px; background: linear-gradient(#fafbfc, #eff3f6 90%); font-size: 12px; color: #586069; display: flex; align-items: center; justify-content: space-between; padding: 0 10px; letter-spacing: .1px; }
.sbtn > span { margin: -1px 0 0 -.5px; }
.sbtn b { color: #24292e; font-weight: 600; }
.b1 { width: 179px; } .b2 { width: 184px; }
.vr { width: 1px; height: 28px; background: #cfd3d7; margin: 0 15px 0 13px; }
.adds svg { margin: 7px 0 0 8px; }
.submit { padding-top: 15px; height: 92px; }
.create { width: 180px; height: 37px; border: 1px solid #108a3a; border-radius: 3px; background: linear-gradient(#04d04f, #01a743 90%); color: #fff; font-weight: 700; display: flex; align-items: center; justify-content: center; padding-top: 2px; letter-spacing: -.03px; }
.foot { width: 980px; margin-left: -140px; border-top: 1px solid #e8eaec; }
.scroll { position: absolute; right: 2px; top: 84px; width: 7px; height: 532px; border-radius: 4px; background: #7b7b7b; }

/* Dock */
.dock { position: absolute; left: 1396px; top: 48px; width: 50px; height: 825px; padding: 2px 0 0 5px; border: 1px solid #3d4a54; border-radius: 5px; background: linear-gradient(#6b7c8a, #586a7c 220px, #414a5b 330px, #2e2e36 430px, #29292a 600px); }
.app { position: relative; width: 30px; height: 34.950px; display: flex; align-items: center; }
.app > svg { width: 29px; height: 30px; overflow: visible; }
.run::after { content: ""; position: absolute; left: 32px; top: 16px; width: 4px; height: 4px; border-radius: 50%; background: #b9bfc6; }
.run:nth-child(-n+5)::after { background: #e6f0fa; }
.dock hr { width: 32px; margin: 8px 0 6px -1px; border: 0; border-top: 1px solid #6e6e6e; }
.app > .trash { width: 25px; height: 32px; margin-left: 2px; }
.app em { position: absolute; top: 0; right: -3px; height: 12px; min-width: 12px; border-radius: 6px; background: #f4151c; color: #fff; font-size: 8px; line-height: 12px; text-align: center; }
.n453 { padding: 0 1px; }
.dk { text-anchor: middle; font-family: Inter, sans-serif; }
.mon { font-size: 5.500px; fill: #fff; } .day { font-size: 14px; fill: #222; } .sm { font-size: 5px; fill: #345; }
```
